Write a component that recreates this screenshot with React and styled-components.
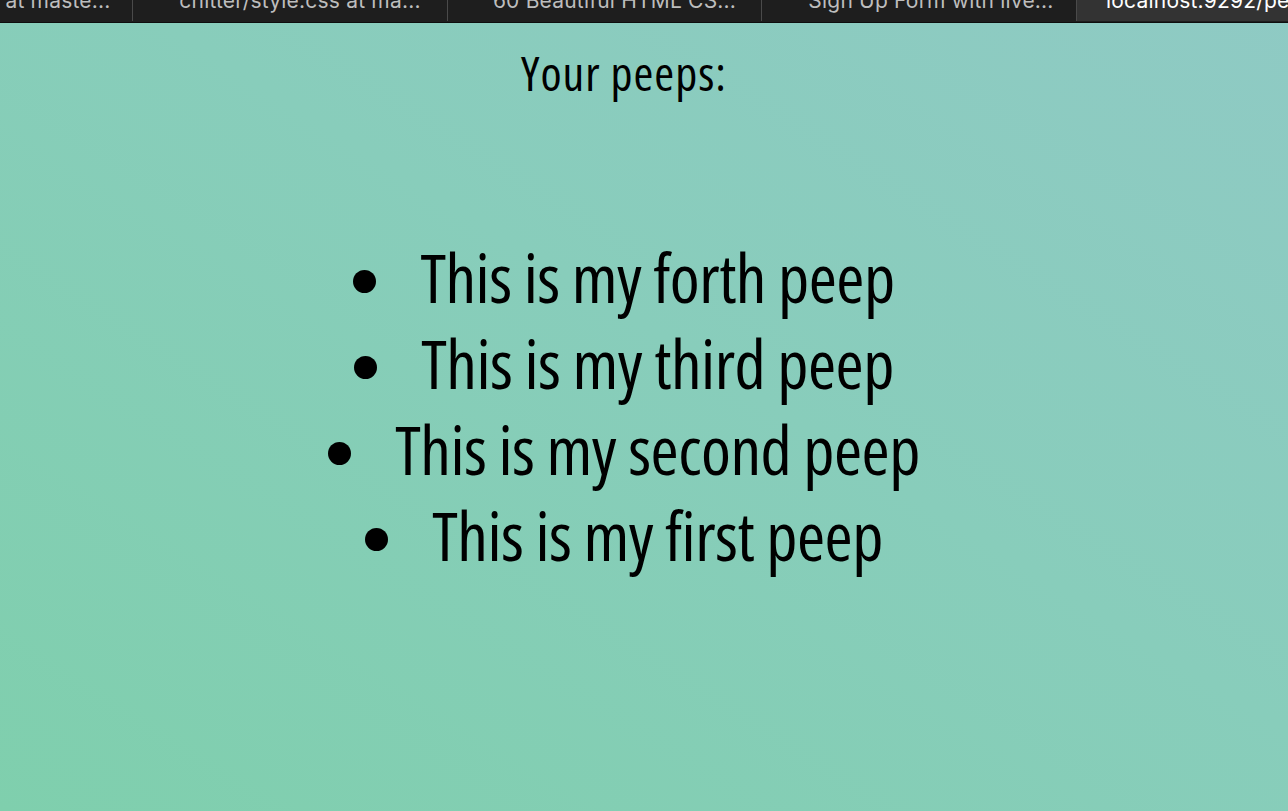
import React from "react";
import styled, { createGlobalStyle } from "styled-components";

const Global = createGlobalStyle`
  html, body { margin: 0; padding: 0; height: 100%; }
  body {
    background: linear-gradient(to top right, #7fcfad 0%, #88cdbb 55%, #8fcac4 100%);
    background-attachment: fixed;
    min-height: 811px;
    overflow: hidden;
  }
`;

const Page = styled.div`
  width: 1288px;
  height: 811px;
  display: flex;
  flex-direction: column;
`;

const TabBar = styled.div`
  display: flex;
  height: 22px;
  background: #1e1e1e;
  border-bottom: 1px solid #0e0e0e;
  flex-shrink: 0;
  overflow: hidden;
`;

const Tab = styled.div`
  width: ${(p) => p.$w}px;
  flex-shrink: 0;
  height: 21px;
  overflow: hidden;
  display: flex;
  justify-content: ${(p) => (p.$active ? "flex-start" : "center")};
  background: ${(p) => (p.$active ? "#333333" : "transparent")};
  border-left: ${(p) => (p.$first ? "none" : "1px solid #4a4a4a")};
  padding-left: ${(p) => p.$pl || 0}px;
  padding-right: ${(p) => p.$pr || 0}px;
  box-sizing: border-box;
`;

const TabLabel = styled.span`
  font-family: "Inter", "Liberation Sans", sans-serif;
  font-size: 21px;
  line-height: 21px;
  letter-spacing: 0.2px;
  margin-top: -10px;
  color: ${(p) => (p.$active ? "#ffffff" : "#bdbdbd")};
  white-space: nowrap;
`;

const Main = styled.main`
  flex: 1;
  display: flex;
  flex-direction: column;
  align-items: center;
  padding-right: 40px;
  font-family: "Open Sans", sans-serif;
  font-stretch: 75%;
  color: #000;
`;

const Heading = styled.h2`
  margin: 22px 0 0;
  font-size: 48px;
  font-weight: 400;
  letter-spacing: 1px;
  line-height: 56px;
`;

const PeepList = styled.ul`
  list-style: none;
  margin: 133px 0 0;
  padding: 0;
  text-align: center;
`;

const Peep = styled.li`
  font-size: 68px;
  line-height: 86px;
  font-weight: 400;
  letter-spacing: -0.5px;
  white-space: nowrap;

  &::before {
    content: "";
    display: inline-block;
    width: 23px;
    height: 23px;
    border-radius: 50%;
    background: #000;
    margin-right: 44px;
    vertical-align: 10px;
  }
`;

const tabs = [
  { w: 132, label: "at maste...", first: true, pl: 0, pr: 16 },
  { w: 315, label: "chitter/style.css at ma...", pl: 20 },
  { w: 314, label: "60 Beautiful HTML CS...", pl: 20 },
  { w: 315, label: "Sign Up Form with live...", pl: 24 },
  { w: 212, label: "localhost:9292/peeps", active: true, pl: 29 },
];

const peeps = [
  "This is my forth peep",
  "This is my third peep",
  "This is my second peep",
  "This is my first peep",
];

export default function App() {
  return (
    <>
      <Global />
      <Page>
        <TabBar>
          {tabs.map((t) => (
            <Tab
              key={t.label}
              $w={t.w}
              $active={t.active}
              $first={t.first}
              $pl={t.pl}
              $pr={t.pr}
            >
              <TabLabel $active={t.active}>{t.label}</TabLabel>
            </Tab>
          ))}
        </TabBar>
        <Main>
          <Heading>Your peeps:</Heading>
          <PeepList>
            {peeps.map((p) => (
              <Peep key={p}>{p}</Peep>
            ))}
          </PeepList>
        </Main>
      </Page>
    </>
  );
}
